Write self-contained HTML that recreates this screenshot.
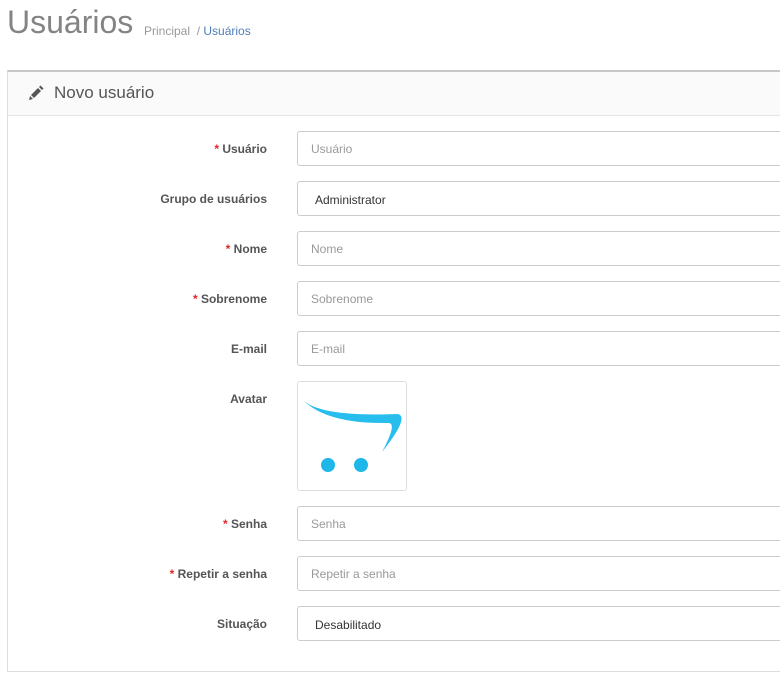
<!DOCTYPE html>
<html><head><meta charset="utf-8"><style>
body{margin:0;background:#fff;font-family:"Liberation Sans",sans-serif;width:780px;height:685px;overflow:hidden;position:relative}
h1{position:absolute;left:7px;top:4px;margin:0;font-weight:normal;font-size:32px;color:#848484}
.bc{position:absolute;left:144px;top:24px;font-size:12px;color:#999}
.bc a{color:#4f7eb8}
.panel{position:absolute;left:7px;top:70px;width:800px;height:599px;border:1px solid #ddd;border-top:2px solid #c8c8c8}
.ph{height:43px;background:#fafafa;border-bottom:1px solid #e4e4e4;position:relative}
.ph span{position:absolute;left:46px;top:11px;font-size:17px;color:#555}
.ph svg{position:absolute;left:20px;top:13px}
.lbl{position:absolute;right:513px;font-size:12px;font-weight:bold;color:#555;text-align:right}
.lbl b{color:#e3262b}
.in{position:absolute;left:297px;width:500px;height:35px;border:1px solid #ccc;border-radius:3px;box-sizing:border-box;font-size:12px;color:#999;padding:10px 13px}
.sel{color:#333;padding-left:17px;padding-top:11px}
.av{position:absolute;left:297px;top:381px;width:110px;height:110px;border:1px solid #ddd;border-radius:3px;box-sizing:border-box}
</style></head><body>
<h1>Usuários</h1>
<div class="bc">Principal &nbsp;/ <a>Usuários</a></div>
<div class="panel"><div class="ph"><svg width="16" height="16" viewBox="0 0 16 16"><path d="M3 10 L10 3 L13 6 L6 13 Z" fill="#555"/><path d="M2 11 L5 14 L1 15 Z" fill="#555"/><path d="M11 2 L12.5 0.5 L15.5 3.5 L14 5 Z" fill="#555"/></svg><span>Novo usuário</span></div></div>
<div class="lbl" style="top:142px"><b>*</b> Usuário</div><div class="in" style="top:131px">Usuário</div>
<div class="lbl" style="top:192px">Grupo de usuários</div><div class="in sel" style="top:181px">Administrator</div>
<div class="lbl" style="top:242px"><b>*</b> Nome</div><div class="in" style="top:231px">Nome</div>
<div class="lbl" style="top:292px"><b>*</b> Sobrenome</div><div class="in" style="top:281px">Sobrenome</div>
<div class="lbl" style="top:342px">E-mail</div><div class="in" style="top:331px">E-mail</div>
<div class="lbl" style="top:392px">Avatar</div>
<div class="av"><svg width="108" height="108" viewBox="0 0 108 108"><path d="M6 19 Q25 35 100 32 Q112 35 84 70 Q100 40 90 41 Q30 42 6 19 Z" fill="#27bdec"/><circle cx="30" cy="83" r="7" fill="#1fb7ea"/><circle cx="63" cy="83" r="7" fill="#1fb7ea"/></svg></div>
<div class="lbl" style="top:517px"><b>*</b> Senha</div><div class="in" style="top:506px">Senha</div>
<div class="lbl" style="top:567px"><b>*</b> Repetir a senha</div><div class="in" style="top:556px">Repetir a senha</div>
<div class="lbl" style="top:617px">Situação</div><div class="in sel" style="top:606px">Desabilitado</div>
</body></html>
